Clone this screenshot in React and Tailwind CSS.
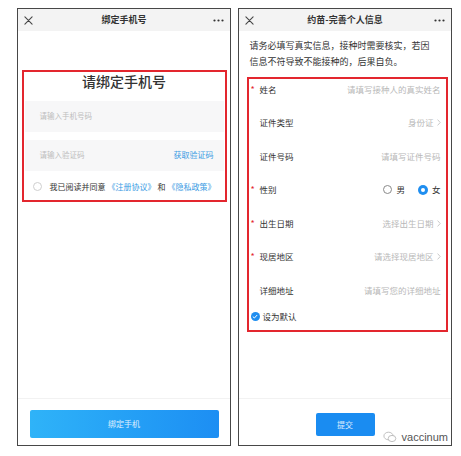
import React from 'react';

const CloseIcon = () => (
  <svg width="9" height="9" viewBox="0 0 10 10" className="text-[#444]">
    <path d="M1 1L9 9M9 1L1 9" stroke="currentColor" strokeWidth="1.2" strokeLinecap="round" />
  </svg>
);

const MoreIcon = () => (
  <svg width="11" height="3" viewBox="0 0 11 3" className="text-[#333]">
    <circle cx="1.5" cy="1.5" r="1.1" fill="currentColor" />
    <circle cx="5.5" cy="1.5" r="1.1" fill="currentColor" />
    <circle cx="9.5" cy="1.5" r="1.1" fill="currentColor" />
  </svg>
);

const Chevron = () => (
  <svg width="4" height="7" viewBox="0 0 4 7" className="ml-[3px] text-[#c4c4c4]">
    <path d="M0.6 0.6L3.2 3.5L0.6 6.4" stroke="currentColor" strokeWidth="0.9" fill="none" />
  </svg>
);

// top bar shared by both phone screens
const TitleBar = ({ title }) => (
  <div className="grid h-[22px] shrink-0 grid-cols-[22px_1fr_22px] items-center bg-[#f3f3f3] px-[6px]">
    <CloseIcon />
    <div className="text-center text-[9px] font-bold text-[#333]">{title}</div>
    <div className="flex justify-end">
      <MoreIcon />
    </div>
  </div>
);

const Phone = ({ title, children }) => (
  <div className="relative flex h-[438px] w-[214px] flex-col border-[1.5px] border-[#474747] bg-white">
    <TitleBar title={title} />
    {children}
  </div>
);

const FormRow = ({ label, required, children }) => (
  <div className="flex h-[20px] items-center pr-[5px]">
    <div className="w-[11px] pl-[2px] text-[9px] leading-none text-[#e3262e]">{required ? '*' : ''}</div>
    <div className="text-[8.5px] text-[#333]">{label}</div>
    <div className="ml-auto flex items-center text-[8.5px] text-[#b8b8b8]">{children}</div>
  </div>
);

const BindPhone = () => (
  <Phone title="绑定手机号">
    <div className="mx-[3.5px] mt-[38.5px] border-2 border-[#e3262e] px-[1px] pb-[5px]">
      <div className="text-center text-[14px] font-medium leading-[18px] text-[#333]">请绑定手机号</div>
      <div className="mt-[11px] flex h-[31px] items-center bg-[#f7f7f8] pl-[15px] text-[7.5px] text-[#bdbdbd]">
        请输入手机号码
      </div>
      <div className="mt-[8px] flex h-[31px] items-center justify-between bg-[#f7f7f8] pl-[15px] pr-[10px] text-[7.5px]">
        <span className="text-[#bdbdbd]">请输入验证码</span>
        <span className="text-[8px] text-[#3a9be3]">获取验证码</span>
      </div>
      <div className="mt-[8px] flex h-[16px] items-center pl-[8px] text-[8px]">
        <span className="h-[9px] w-[9px] rounded-full border border-[#cfcfcf]" />
        <span className="ml-[8px] text-[#333]">我已阅读并同意</span>
        <span className="ml-[2px] text-[#3a9be3]">《注册协议》</span>
        <span className="mx-[2px] text-[#333]">和</span>
        <span className="text-[#3a9be3]">《隐私政策》</span>
      </div>
    </div>
    <div className="flex-1" />
    <div className="h-[47px] border-t border-[#f2f2f2] px-[11.5px] pt-[11px]">
      <div className="flex h-[28px] items-center justify-center rounded-[2px] bg-gradient-to-r from-[#2fb3f8] to-[#1d8ef3] text-[8px] text-white/85">
        绑定手机
      </div>
    </div>
  </Phone>
);

const PersonalInfo = () => (
  <Phone title="约苗-完善个人信息">
    <div className="pl-[10.5px] pt-[7px] text-[9px] leading-[16px] text-[#333]">
      请务必填写真实信息，接种时需要核实，若因
      <br />
      信息不符导致不能接种的，后果自负。
    </div>
    <div className="ml-[7.5px] mr-[3.5px] mt-[7px] border-2 border-[#e3262e] pb-[6px]">
      <div className="flex flex-col gap-[13.5px]">
        <FormRow label="姓名" required>请填写接种人的真实姓名</FormRow>
        <FormRow label="证件类型">
          身份证
          <Chevron />
        </FormRow>
        <FormRow label="证件号码">请填写证件号码</FormRow>
        <FormRow label="性别" required>
          <span className="h-[9px] w-[9px] rounded-full border border-[#8a8a8a]" />
          <span className="ml-[4px] text-[#333]">男</span>
          <span className="ml-[13px] flex h-[10px] w-[10px] items-center justify-center rounded-full bg-[#1f8ef0]">
            <span className="h-[4px] w-[4px] rounded-full bg-white" />
          </span>
          <span className="ml-[4px] text-[#333]">女</span>
        </FormRow>
        <FormRow label="出生日期" required>
          选择出生日期
          <Chevron />
        </FormRow>
        <FormRow label="现居地区" required>
          请选择现居地区
          <Chevron />
        </FormRow>
        <FormRow label="详细地址">请填写您的详细地址</FormRow>
      </div>
      <div className="mt-[8px] flex h-[16px] items-center pl-[2px]">
        <span className="flex h-[9px] w-[9px] items-center justify-center rounded-full bg-[#1f8ef0]">
          <svg width="6" height="5" viewBox="0 0 6 5">
            <path d="M0.8 2.6L2.4 4L5.2 1" stroke="#fff" strokeWidth="1" fill="none" />
          </svg>
        </span>
        <span className="ml-[3px] text-[8.5px] text-[#333]">设为默认</span>
      </div>
    </div>
    <div className="flex-1" />
    <div className="flex h-[47px] justify-center border-t border-[#f2f2f2] pt-[14px]">
      <div className="flex h-[23px] w-[59px] items-center justify-center rounded-[2px] bg-[#1a8cf1] text-[8px] text-white/85">
        提交
      </div>
    </div>
    {/* watermark sits over the bottom corner */}
    <div className="absolute bottom-[0px] right-[3px] flex items-center gap-[5px]">
      <svg width="14" height="12" viewBox="0 0 14 12" className="text-[#b0b0b0]">
        <ellipse cx="5.5" cy="5" rx="4.6" ry="3.8" stroke="currentColor" strokeWidth="0.8" fill="none" />
        <ellipse cx="9" cy="7.5" rx="3.8" ry="3.1" stroke="currentColor" strokeWidth="0.8" fill="white" />
      </svg>
      <span className="font-['Liberation_Sans',sans-serif] text-[11px] text-[#555]">vaccinum</span>
    </div>
  </Phone>
);

export default function App() {
  return (
    <div className="flex h-[456px] w-[461px] gap-[7px] bg-white pl-[17px] pt-[8px] font-['Noto_Sans_CJK_SC','Noto_Sans',sans-serif]">
      <BindPhone />
      <PersonalInfo />
    </div>
  );
}
